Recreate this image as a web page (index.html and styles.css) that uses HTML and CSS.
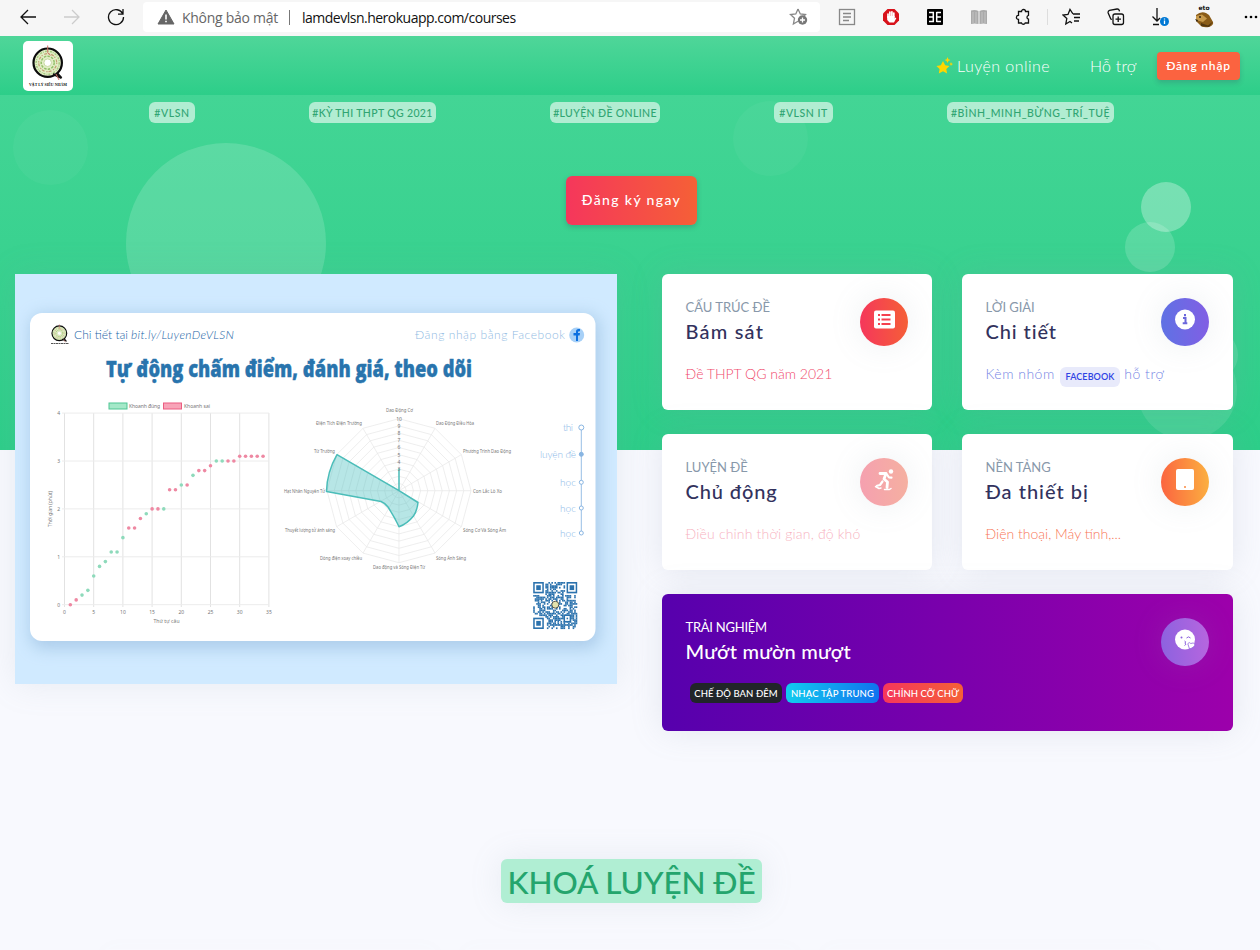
FILE: index.html
```html
<!DOCTYPE html>
<html lang="vi">
<head>
<meta charset="utf-8">
<title>Khoá luyện đề</title>
<link rel="stylesheet" href="styles.css">
</head>
<body>
<header class="browser">
  <div class="cell"><svg width="18" height="18" class="ico"><path d="M17 9H2M9 2L2 9l7 7"/></svg></div>
  <div class="cell"><svg width="18" height="18" class="ico faint"><path d="M1 9h15M9 2l7 7-7 7"/></svg></div>
  <div class="cell"><svg width="18" height="18" class="ico"><path d="M15.8 6A7.5 7.5 0 1 0 16.5 9M16 1v5.2h-5"/></svg></div>
  <div class="address">
    <svg width="18" height="16"><path d="M9 1L17 15H1Z" fill="#666" stroke="#666" stroke-linejoin="round"/><path d="M9 5.5v5M9 11.7v1.5" stroke="#fff" stroke-width="1.6"/></svg>
    <span class="insecure">Không bảo mật</span>
    <span class="bar"></span>
    <span class="url">lamdevlsn.herokuapp.com/courses</span>
    <svg class="fav ico grey" width="20" height="20"><path d="M9 2l2.3 5 5.2.6-2 2M9 2L6.8 7l-5.300.6 4 3.700L4.400 17 9 14.200"/><circle cx="13.500" cy="13" r="4.700" fill="#777" stroke="none"/><path d="M13.500 10.500v5M11 13h5" stroke="#fff"/></svg>
  </div>
  <div class="cell"><svg width="18" height="18" class="ico grey"><rect x="1.500" y="1.500" width="15" height="15"/><path d="M5 5.500h8M5 9h8M5 12.500h6"/></svg></div>
  <div class="cell"><svg width="18" height="18"><path d="M5.500 1h7L17 5.500v7L12.500 17h-7L1 12.500v-7Z" fill="#d8121b"/><path d="M6 9.500V6M7.900 8V4M9.900 8V3.800M11.800 9V5" stroke="#fff" stroke-width="1.700" stroke-linecap="round"/><path d="M5.200 8h7.400v2.500l1-1 .7.700L12 14.500H7.500L5.200 12Z" fill="#fff"/></svg></div>
  <div class="cell"><svg width="18" height="18"><rect x="1" y="1" width="16" height="16" rx="1"/><path d="M3 4.500h5M3 9h5M3 13.500h5M10.500 4.500h4.500M10.500 9h4.500M10.500 13.500h4.500M7.300 4v10M10.700 4v10" stroke="#fff" stroke-width="1.500"/></svg></div>
  <div class="cell"><svg width="18" height="18"><path d="M1 2.500q4-1 7.500.5v13q-4-1-7.500 0ZM9.500 3q3.500-1.500 7.500-.5V16q-3.500-1-7.500 0Z" fill="#aaa"/><path d="M3 4v11M15 4v11M6 4v11M12 4v11" stroke="#c4c4c4"/></svg></div>
  <div class="cell"><svg width="18" height="18" class="ico"><path d="M5.500 3.500h2a2 2 0 0 1 4 0h3v3.800a2 2 0 0 0 0 3.900V15h-3.300a2 2 0 0 1-3.700 0H4.500v-3.500a2 2 0 0 1 0-4.200V3.500Z"/></svg></div>
  <span class="split"></span>
  <div class="cell"><svg width="20" height="18" class="ico"><path d="M11 6L8 1.500 6 6.500 1 7l3.800 3.500L3.800 16 8 13.500 10 15M11 6h7M12 9.500h6M12 13h5"/></svg></div>
  <div class="cell"><svg width="18" height="18" class="ico"><rect x="6" y="6" width="10.500" height="10.500" rx="2"/><path d="M11.200 8.500v5.500M8.500 11.200H14M5 11.500L3.800 11 1.200 5q-.5-2 1.300-2.700L10 1q1.800-.2 2.300 1.500l.2.800"/></svg></div>
  <div class="cell"><svg width="20" height="20" class="ico"><path d="M7 1v13M2.500 9.500L7 14l3-3M3 17.500h6"/><circle cx="14.500" cy="14.500" r="4.500" fill="#0078d4" stroke="none"/><path d="M14.500 13.500V17M14.500 11.500v1" stroke="#fff"/></svg></div>
  <div class="cell"><svg width="22" height="24"><text x="11" y="5" text-anchor="middle" class="eto">eto</text><path d="M3 10Q8 6 13 8l3 2 4 7q1 3-4 5-7 1-9-2l-4-4Z" fill="#8a5c18"/><path d="M3 11l6-1.500 5 4-4 3.500-7-2Z" fill="#c79a4b"/><path d="M8 18l7 2.500 5-4-4 5.500-8-1Z" fill="#54380f"/><path d="M2 14l3 1-1 2Z" fill="#302312"/><circle cx="7" cy="12" r="1" fill="#302312"/></svg></div>
  <div class="cell more"><svg width="14" height="4"><circle cx="2" cy="2" r="1.300"/><circle cx="7" cy="2" r="1.300"/><circle cx="12" cy="2" r="1.300"/></svg></div>
</header>

<nav class="nav">
  <svg class="logo" width="50" height="50" viewBox="0 0 50 50">
    <rect width="50" height="50" rx="5" fill="#fff"/>
    <g id="emblem"><circle cx="24.700" cy="21.700" r="14.200" fill="#e2eec6" stroke="#0b0b0b" stroke-width="2.200"/>
    <circle cx="24.700" cy="21.700" r="11.500" fill="none" stroke="#a5c97f" stroke-width="1.500" stroke-dasharray="2 1 .8 1.300"/>
    <circle cx="24.700" cy="21.700" r="9" fill="none" stroke="#c39f74" stroke-width="1.200" stroke-dasharray="1.300 1.800 3 1"/>
    <circle cx="24.700" cy="21.700" r="6.500" fill="none" stroke="#94bf6b" stroke-width="1.500" stroke-dasharray="2.500 1.200"/>
    <circle cx="24.700" cy="21.700" r="3.800" fill="#fff" stroke="#c9d9a5"/>
    <path d="M30 33l8.500 4-4.500-5" fill="none" stroke="#111" stroke-width="2"/><path d="M24.700 4.500v7l3 3M33 33l3 6" fill="none" stroke="#cf6f64"/></g>
    <text x="6" y="45" textLength="38" lengthAdjust="spacingAndGlyphs" class="logotext">VẬT LÝ SIÊU NHẢM</text>
  </svg>
  <div class="links">
    <svg width="18" height="18"><path d="M8 4l2.200 4.200 4.300.7-3.200 3 .8 4.600L8 14.300 3.800 16.500l.8-4.600-3.200-3 4.400-.7Z" fill="#ffd600"/><path d="M12.500 0l.9 2.200 2.100.9-2.100.8-.9 2.100-.9-2.100-2-.8 2-.9ZM16 5l.6 1.500 1.400.6-1.400.6L16 9l-.6-1.400-1.200-.5 1.200-.6Z" fill="#ffd600"/></svg>
    <a class="online">Luyện online</a>
    <a class="help">Hỗ trợ</a>
    <a class="login">Đăng nhập</a>
  </div>
</nav>

<main class="page">
  <div class="bubbles">
    <i class="b1"></i><i class="b2"></i><i class="b3"></i><i class="b4"></i><i class="b5"></i><i class="b6"></i><i class="b7"></i>
  </div>
  <div class="tags">
    <span class="tag t1">#VLSN</span><span class="tag t2">#KỲ THI THPT QG 2021</span><span class="tag t3">#LUYỆN ĐỀ ONLINE</span><span class="tag t4">#VLSN IT</span><span class="tag t5">#BÌNH_MINH_BỪNG_TRÍ_TUỆ</span>
  </div>
  <a class="register">Đăng ký ngay</a>

  <section class="content">
    <svg class="preview" viewBox="15 274 602 410" width="602" height="410">
      <defs><filter id="soft" x="-10%" y="-15%" width="120%" height="130%"><feGaussianBlur stdDeviation="8"/></filter></defs>
      <rect x="15" y="274" width="602" height="410" fill="#d0eaff"/>
      <rect x="30" y="314" width="570" height="335" rx="14" fill="#a9c9e8" opacity=".9" filter="url(#soft)"/>
      <rect x="30" y="313" width="565.500" height="328" rx="12" fill="#fff"/>
      <use href="#emblem" transform="translate(46.500 322) scale(.52)"/>
      <path d="M51 343.500h18" stroke="#555" stroke-dasharray="2 .5"/>
      <text x="74" y="339" textLength="54" class="blue">Chi tiết tại</text>
      <text x="131" y="339" textLength="103" class="blue slant">bit.ly/LuyenDeVLSN</text>
      <text x="415" y="339" textLength="150" class="pale">Đăng nhập bằng Facebook</text>
      <circle cx="576.700" cy="335" r="7.500" fill="#a7d0f7"/>
      <path d="M576 341v-5.500h-2.500V333h2.500v-1.500q0-2.500 2.500-2.500h1.500v2.200h-1q-1 0-1 1v.8h2l-.4 2.500H578v5.500Z" fill="#0b6fe0"/>
      <text x="106" y="377" textLength="366" lengthAdjust="spacingAndGlyphs" class="headline">Tự động chấm điểm, đánh giá, theo dõi</text>
      <rect x="109" y="403" width="18" height="6" fill="#a4e8c8" stroke="#4fc593"/>
      <text x="129" y="408" textLength="31" class="micro">Khoanh đúng</text>
      <rect x="163.500" y="403" width="18" height="6" fill="#f7a4b8" stroke="#ec5c81"/>
      <text x="184" y="408" textLength="26" class="micro">Khoanh sai</text>
      <g id="scatter"></g>
      <text x="153.500" y="623" textLength="26" class="micro">Thứ tự câu</text>
      <text transform="translate(52 527) rotate(-90)" textLength="36" class="micro">Thời gian (phút)</text>
      <g id="radar"></g>
      <path d="M581.300 428v105" stroke="#98bfe5"/>
      <g fill="#fff" stroke="#88b5e2"><circle cx="581.300" cy="427.500" r="2.500"/><circle cx="581.300" cy="454.300" r="2" fill="#88b5e2"/><circle cx="581.300" cy="482.300" r="2"/><circle cx="581.300" cy="508" r="2"/><circle cx="581.300" cy="533" r="2"/></g>
      <g class="steps"><text x="563" y="431" textLength="10">thi</text><text x="540" y="458" textLength="36">luyện đề</text><text x="560" y="486" textLength="16">học</text><text x="560" y="512" textLength="16">học</text><text x="560" y="537" textLength="16">học</text></g>
      <g id="qr" fill="#2b72ad"></g>
      <circle cx="555.300" cy="604.700" r="3.500" fill="#e3e3ae" stroke="#333" stroke-width=".8"/>
    </svg>

    <div class="cards">
      <article class="card red">
        <div><h5>CẤU TRÚC ĐỀ</h5><h2 class="h-a">Bám sát</h2></div>
        <div class="round"><svg width="24" height="24"><rect x="2" y="2.500" width="21" height="18" rx="2" fill="#fff"/><path d="M6 7h2M6 11.500h2M6 16h2M9.500 7H18.500M9.500 11.500H18.500M9.500 16H18.500" stroke="#f5404e" stroke-width="1.900"/></svg></div>
        <p class="p-a">Đề THPT QG năm 2021</p>
      </article>
      <article class="card indigo">
        <div><h5 class="k-b">LỜI GIẢI</h5><h2 class="h-b">Chi tiết</h2></div>
        <div class="round"><svg width="24" height="24"><circle cx="12" cy="11.500" r="10" fill="#fff"/><path d="M10 10h2.500v5M9.700 15.200h4.600M12 6v2.300" fill="none" stroke="#6b67dc" stroke-width="2"/></svg></div>
        <p class="p-b">Kèm nhóm <span class="fb">FACEBOOK</span> hỗ trợ</p>
      </article>
      <article class="card pink">
        <div><h5 class="k-c">LUYỆN ĐỀ</h5><h2 class="h-c">Chủ động</h2></div>
        <div class="round"><svg width="24" height="24" fill="none" stroke="#fff" stroke-linecap="round" stroke-linejoin="round"><circle cx="19" cy="3.500" r="2.200" fill="#fff" stroke="none"/><path d="M8 5.500h6l-2 5.500 3.500 3-.5 5.500" stroke-width="2.800"/><path d="M15 6.500l2 3 2.500.2M10.500 13.500l-2.500 3.500-3 .7" stroke-width="2.200"/><path d="M3.500 18.500l3.500 2 2-.5M12.500 21.500h5l1.500-1" stroke-width="1.500"/></svg></div>
        <p class="p-c">Điều chỉnh thời gian, độ khó</p>
      </article>
      <article class="card orange">
        <div><h5 class="k-d">NỀN TẢNG</h5><h2 class="h-d">Đa thiết bị</h2></div>
        <div class="round"><svg width="24" height="24"><rect x="3" y="1" width="18" height="21" rx="2" fill="#fff"/><circle cx="12" cy="19" r="1" fill="#fb8a40"/></svg></div>
        <p class="p-d">Điện thoại, Máy tính,...</p>
      </article>
      <article class="card wide">
        <div><h5 class="k-e">TRẢI NGHIỆM</h5><h2 class="h-e">Mướt mườn mượt</h2></div>
        <div class="round"><svg width="24" height="24"><circle cx="12" cy="11.500" r="10" fill="#fff"/><path d="M11.500 13q2.500.9.300 2 2.500 1.200-.3 2.500" fill="none" stroke="#8d62dd"/><circle cx="8.500" cy="9.500" r="1" fill="#8d62dd"/><path d="M13.500 10q2-2.300 4 0" fill="none" stroke="#8d62dd"/><path d="M16.500 21l-1.700-5.300q1.400-2.200 3-.2 2.800-1.500 4 .8.400 2.700-5.300 4.700Z" fill="#fff" stroke="#8d62dd" stroke-width=".8"/></svg></div>
        <div class="pills"><span class="dark">CHẾ ĐỘ BAN ĐÊM</span><span class="sky">NHẠC TẬP TRUNG</span><span class="hot">CHỈNH CỠ CHỮ</span></div>
      </article>
    </div>
  </section>
  <h1 class="title">KHOÁ LUYỆN ĐỀ</h1>
  <div class="next"><i></i><i></i><i></i></div>
</main>
<script src="charts.js"></script>
</body>
</html>
```

FILE: styles.css
```css
* { box-sizing: border-box; }
body { margin: 0; width: 1260px; height: 950px; overflow: hidden; background: #f8f9fe; font-family: Lato, "Noto Sans", sans-serif; color: #32325d; }
h1, h2, h5, p { margin: 0; }
i { display: block; }

.browser { display: flex; align-items: center; height: 36px; padding: 0 0 2px 6px; background: #f6f6f6; font-family: "Open Sans", "Noto Sans", sans-serif; font-size: 14px; }
.cell { width: 44px; display: flex; justify-content: center; flex: none; }
.more { width: 50px; }
.ico { fill: none; stroke: #111; stroke-width: 1.3; }
.faint { stroke: #ccc; }
.grey { stroke: #888; }
.address { display: flex; align-items: center; width: 677px; height: 30px; margin: 0 5px; padding-left: 14px; background: #fff; border-radius: 4px; flex: none; }
.insecure { width: 96px; margin-left: 7px; color: #666; letter-spacing: -.27px; white-space: nowrap; }
.bar { width: 1px; height: 15px; margin: 0 12px 0 11px; background: #777; }
.url { color: #111; letter-spacing: -.5px; white-space: nowrap; }
.fav { margin: 0 11px 0 auto; }
.split { width: 1px; height: 16px; margin: 0 2px; background: #ddd; flex: none; }
.eto { font: bold 6px "DejaVu Sans", sans-serif; fill: #111; }

.nav { display: flex; align-items: center; height: 59px; padding: 0 20px 0 23px; background: linear-gradient(#4fd699, #2dce89); }
.logotext { font: bold 4.5px "Liberation Serif", serif; fill: #111; }
.links { display: flex; align-items: center; margin-left: auto; color: #fff; font-size: 16px; font-weight: 300; white-space: nowrap; }
.online { width: 94px; margin: 0 39px 0 4px; letter-spacing: .45px; }
.help { width: 47px; margin-right: 20px; letter-spacing: .2px; }
.login { width: 83px; height: 28px; line-height: 27px; text-align: center; background: #fb6340; border-radius: 4px; font-size: 12px; font-weight: 600; letter-spacing: .8px; box-shadow: 0 3px 5px rgba(50,50,93,.2); }

.page { position: relative; height: 855px; padding-top: 7px; background: linear-gradient(#43d595, #2dce89) no-repeat 0 0 / 100% 355px; }
.bubbles { position: absolute; inset: 0 0 auto 0; height: 355px; overflow: hidden; }
.bubbles i { position: absolute; border-radius: 50%; background: #fff; }
.b1 { left: 13px; top: 15px; width: 75px; height: 75px; opacity: .04; }
.b2 { left: 126px; top: 48px; width: 200px; height: 200px; opacity: .15; }
.b3 { left: 733px; top: 6px; width: 75px; height: 75px; opacity: .04; }
.b4 { left: 1141px; top: 87px; width: 50px; height: 50px; opacity: .3; }
.b5 { left: 1125px; top: 127px; width: 50px; height: 50px; opacity: .16; }
.b6 { left: 1188px; top: 235px; width: 50px; height: 50px; opacity: .12; }
.b7 { left: 1137px; top: 245px; width: 100px; height: 100px; opacity: .1; }

.tags { position: relative; display: flex; gap: 114px; padding-left: 149px; }
.tag { height: 21px; line-height: 22px; text-align: center; white-space: nowrap; border-radius: 6px; background: rgba(220,247,234,.72); color: #30a572; font-size: 10.5px; font-weight: 500; letter-spacing: .35px; }
.t1 { width: 46px; letter-spacing: .6px; }
.t2 { width: 127px; }
.t3 { width: 110px; }
.t4 { width: 59px; letter-spacing: .5px; }
.t5 { width: 167px; letter-spacing: .5px; }
.register { position: relative; display: block; width: 131px; height: 49px; margin: 53px 0 0 566px; line-height: 47px; text-align: center; border-radius: 6px; background: linear-gradient(87deg, #f5365c, #f56036); color: #fff; font-size: 14px; font-weight: 500; letter-spacing: 1.35px; box-shadow: 0 2px 5px rgba(50,50,93,.25); }

.content { position: relative; display: flex; gap: 45px; margin: 49px 27px 0 15px; }
.preview { flex: none; box-shadow: 0 0 32px rgba(136,152,170,.15); }
.blue { font: 300 12px Lato, sans-serif; fill: #1b64a6; }
.slant { font-style: italic; }
.pale { font: 300 12px Lato, sans-serif; fill: #91bbe3; }
.headline { font: 800 22px "Open Sans", "Noto Sans", sans-serif; fill: #2874ad; stroke: #2874ad; stroke-width: .4; }
.micro { font: 5px "Noto Sans", sans-serif; fill: #777; }
.steps { font: 300 10px Lato, sans-serif; fill: #8bb9e8; }

.cards { display: grid; grid-template-columns: 270px 271px; grid-template-rows: 136px 136px 137px; gap: 24px 30px; }
.card { display: grid; grid-template-columns: 1fr 48px; grid-template-rows: 48px auto; row-gap: 15px; padding: 24px 24px 0 23.500px; border-radius: 6px; background: #fff; box-shadow: 0 0 32px rgba(136,152,170,.18); white-space: nowrap; }
.card h5 { line-height: 18px; font-size: 13px; font-weight: 400; color: #8898aa; }
.card h2 { margin-top: 2px; line-height: 26px; font-size: 20px; font-weight: 500; }
.card p { grid-column: 1 / 3; margin-top: -1px; font-size: 14px; font-weight: 300; line-height: 27px; }
.card .h-a { letter-spacing: 1.2px; }
.card .h-b { letter-spacing: .9px; }
.card .h-c { letter-spacing: .9px; }
.card .h-d { letter-spacing: 1px; }
.card .h-e { letter-spacing: .2px; }
.card .k-b { letter-spacing: -.1px; }
.card .k-e { letter-spacing: -.25px; }
.card .p-b { letter-spacing: .5px; }
.card .p-c { letter-spacing: .18px; }
.round { width: 48px; height: 48px; padding: 10px 0 0 12px; border-radius: 50%; box-shadow: 0 0 32px rgba(136,152,170,.15); }
.red .round { background: linear-gradient(87deg, #f5365c, #f56036); }
.indigo .round { background: linear-gradient(87deg, #5e72e4, #825ee4); }
.pink .round { background: linear-gradient(87deg, #f5a0b0, #f5b0a0); }
.orange .round { background: linear-gradient(87deg, #fb6340, #fbb140); }
.red p { color: #f04a6c; }
.indigo p { color: #7484e4; }
.pink p { color: #f7b3bf; }
.orange p { color: #f87759; }
.fb { display: inline-block; height: 20px; width: 60px; margin: 0 0 0 1px; line-height: 20px; text-align: center; vertical-align: 0; position: relative; top: 1px; border-radius: 6px; background: #e8eafb; color: #2f43e4; font-size: 9px; font-weight: 600; letter-spacing: .1px; }
.wide { grid-column: 1 / 3; background: linear-gradient(87deg, #5600ad, #9d00ab); }
.wide h5, .wide h2 { color: #fff; }
.wide .round { background: linear-gradient(87deg, #8c62df, #b766df); }
.pills { grid-column: 1 / 3; display: flex; gap: 4px; padding: 2px 0 0 4.500px; }
.pills span { height: 20px; line-height: 21px; text-align: center; border-radius: 6px; color: #fff; font-size: 9.500px; font-weight: 500; letter-spacing: .05px; }
.pills .dark { width: 92px; background: #212529; }
.pills .sky { width: 93px; background: linear-gradient(87deg, #11cdef, #1171ef); letter-spacing: .15px; }
.pills .hot { width: 80px; background: linear-gradient(87deg, #f5365c, #f56036); }

.title { width: 261px; height: 44px; margin: 128px 0 0 501px; line-height: 46px; text-align: center; white-space: nowrap; border-radius: 6px; background: #b0eed3; color: #24a56d; font-size: 31.500px; font-weight: 500; letter-spacing: -.1px; box-shadow: 0 0 32px rgba(136,152,170,.15); }
.next { display: grid; grid-template-columns: repeat(3, 330px); justify-content: center; gap: 30px; margin-top: 46px; }
.next i { height: 1px; box-shadow: 0 6px 20px rgba(136,152,170,.3); }
```

FILE: charts.js
```javascript
const NS = 'http://www.w3.org/2000/svg';
function add(parent, tag, attrs, text) {
  const el = document.createElementNS(NS, tag);
  for (const k in attrs) el.setAttribute(k, attrs[k]);
  if (text !== undefined) el.textContent = text;
  parent.appendChild(el);
  return el;
}

// Time spent per question
const scatter = document.getElementById('scatter');
const px = v => 64.5 + v * 5.84, py = v => 604.7 - v * 47.9;
for (let v = 0; v <= 35; v += 5) {
  add(scatter, 'path', { d: `M${px(v)} 413V607`, stroke: '#e2e2e2' });
  add(scatter, 'text', { x: px(v), y: 614, 'text-anchor': 'middle', class: 'micro' }, v);
}
for (let v = 0; v <= 4; v++) {
  add(scatter, 'path', { d: `M62 ${py(v)}H269`, stroke: '#ececec' });
  add(scatter, 'text', { x: 60, y: py(v) + 2, 'text-anchor': 'end', class: 'micro' }, v);
}
const times = [0, .1, .2, .3, .6, .8, .9, 1.1, 1.1, 1.4, 1.6, 1.6, 1.8, 1.9, 2, 2, 2, 2.4, 2.4, 2.5, 2.5, 2.7, 2.8, 2.8, 2.9, 3, 3, 3, 3, 3.1, 3.1, 3.1, 3.1, 3.1];
const right = [3, 4, 5, 6, 7, 8, 9, 10, 14, 17, 20, 22, 26, 27];
times.forEach((t, i) => add(scatter, 'circle', { cx: px(i + 1), cy: py(t), r: 1.8, fill: right.includes(i + 1) ? '#8edabb' : '#ee88a2' }));

// Score per topic
const radar = document.getElementById('radar');
const pt = (k, v) => {
  const a = k * Math.PI / 6;
  return [399 + Math.sin(a) * v * 7.2, 490.7 - Math.cos(a) * v * 7.2];
};
const ring = values => 'M' + values.map((v, k) => pt(k, v).map(n => n.toFixed(1)).join(' ')).join('L') + 'Z';
for (let v = 1; v <= 10; v++) add(radar, 'path', { d: ring(Array(12).fill(v)), fill: 'none', stroke: '#e6e6e6', 'stroke-width': .7 });
for (let k = 0; k < 12; k++) add(radar, 'path', { d: `M399 490.7L${pt(k, 10).join(' ')}`, stroke: '#e6e6e6', 'stroke-width': .7 });
add(radar, 'path', { d: 'M399 490.7V469V490.7L418 502.500Q417 511 413.500 516 407 524 399 526.700 395 518 388 507 385 503 381 501.500L326.500 491.500Q327 472 337 454.700Z', fill: '#4bc0c0', 'fill-opacity': .4, stroke: '#4bbdb9', 'stroke-width': 1.5, 'stroke-linejoin': 'round' });
for (let v = 3; v <= 10; v++) add(radar, 'text', { x: 399, y: 492.500 - v * 7.2, 'text-anchor': 'middle', class: 'micro' }, v);
[['Dao Động Cơ', 386, 412, 27], ['Dao Động Điều Hòa', 436, 425, 38], ['Phương Trình Dao Động', 463, 452.500, 48],
 ['Con Lắc Lò Xo', 473, 492.500, 29], ['Sóng Cơ Và Sóng Âm', 463, 532, 43], ['Sóng Ánh Sáng', 436, 559.500, 30],
 ['Dao động và Sóng Điện Từ', 373, 569, 52], ['Dòng điện xoay chiều', 320, 559.500, 42], ['Thuyết lượng tử ánh sáng', 285, 532, 50],
 ['Hạt Nhân Nguyên Tử', 284, 492.500, 41], ['Từ Trường', 314, 452.500, 21], ['Điện Tích Điện Trường', 316, 425, 46]
].forEach(([t, x, y, w]) => add(radar, 'text', { x, y, textLength: w, lengthAdjust: 'spacingAndGlyphs', class: 'micro' }, t));

// QR code
const qr = document.getElementById('qr');
const N = 29, mw = 44 / N, mh = 47 / N;
const cell = (x, y, w, h, fill) => add(qr, 'rect', { x: 533.200 + x * mw, y: 582 + y * mh, width: w * mw, height: h * mh, ...(fill ? { fill } : {}) });
let seed = 77;
for (let y = 0; y < N; y++) for (let x = 0; x < N; x++) {
  seed = (seed * 48271) % 2147483647;
  const corner = (x < 8 && y < 8) || (x > 20 && y < 8) || (x < 8 && y > 20);
  if (!corner && seed / 2147483647 > .42) cell(x, y, 1.05, 1.05);
}
[[0, 0], [22, 0], [0, 22]].forEach(([x, y]) => { cell(x, y, 7, 7); cell(x + 1, y + 1, 5, 5, '#fff'); cell(x + 2, y + 2, 3, 3); });
cell(20, 20, 5, 5); cell(21, 21, 3, 3, '#fff'); cell(22, 22, 1, 1);
```
